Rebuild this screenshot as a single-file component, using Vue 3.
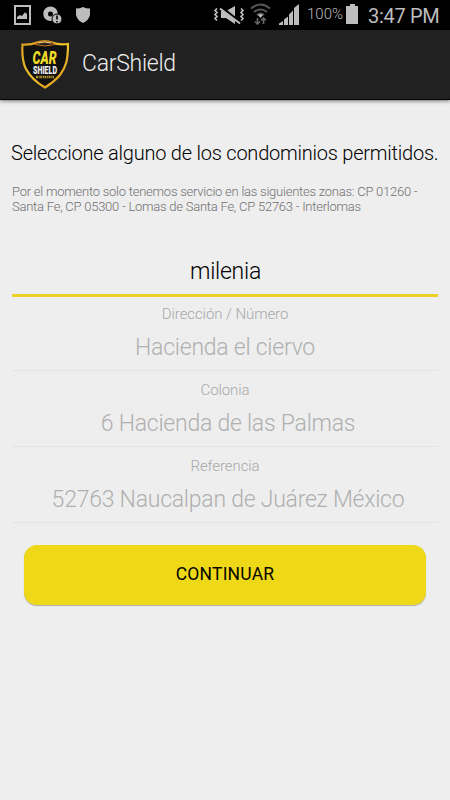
<script setup>
const fields = [
  { label: 'Dirección / Número', value: 'Hacienda el ciervo' },
  { label: 'Colonia', value: '6 Hacienda de las Palmas', indent: true },
  { label: 'Referencia', value: '52763 Naucalpan de Juárez México', indent: true },
]
</script>

<template>
  <div class="screen">
    <div class="status">
      <svg class="status-icons" width="300" height="30" viewBox="0 0 300 30" fill="#bdbdbd">
        <rect x="15" y="6" width="15" height="18" fill="none" stroke="#bdbdbd" stroke-width="2" />
        <path d="M17 19V17l3-2 2 1 3-4 1 2 1-1v6z" />
        <path fill-rule="evenodd" d="M50.500 6.500a7 7 0 1 0 0 14.500a7 7 0 0 0 0-14.500zM50.500 11.500a2.500 2.500 0 1 1 0 5a2.500 2.500 0 0 1 0-5z" />
        <circle cx="57" cy="19" r="5" stroke="#000" />
        <path d="M57 15.500v4M57 21v1.500" stroke="#000" stroke-width="1.600" />
        <path d="M76 8.500Q80 8.500 83 7Q86 8.500 90 8.500V15Q89 20 83 23Q77 20 76 15Z" />
        <path d="M221 11h5l9-5v18l-9-6h-5z" />
        <path d="M220 6.500l20 16" stroke="#000" stroke-width="3.500" />
        <path d="M220 8.500l20 15" stroke="#bdbdbd" stroke-width="2" />
        <path d="M217 8.500l-2 2 2 2-2 2 2 2-2 2 2 2M241 8.500l2 2-2 2 2 2-2 2 2 2-2 2" fill="none" stroke="#bdbdbd" stroke-width="1.700" />
        <path d="M251 8.500q9.500-8 19 0M254 12q6.500-5 13 0M257 15q3.500-3 7 0" fill="none" stroke="#565656" stroke-width="2.100" />
        <path d="M258 15q2.500-2 5 0l-2.500 3z" />
        <path d="M257.500 18v6m-2.500-2.500l2.500 2.500 2.500-2.500M263.500 24v-6m-2.500 2.500l2.500-2.500 2.500 2.500" fill="none" stroke="#656565" stroke-width="1.700" />
        <path d="M279 25v-1.500l4-2.500v4zM284 25v-5.500l4-3v8.500zM289 25V14.500l4-4V25zM294 25V8l5-4V25z" />
      </svg>
      <span class="percent">100%</span>
      <svg class="battery" width="14" height="21" viewBox="0 0 14 21" fill="#bdbdbd">
        <path d="M5 0h5v2h3v18H1V2h4z" />
      </svg>
      <span class="clock">3:47 PM</span>
    </div>
    <header class="appbar">
      <svg class="logo" width="50" height="52" viewBox="0 0 50 52">
        <defs>
          <linearGradient id="gold" x2="1" y2="1">
            <stop stop-color="#d99b20" />
            <stop offset=".5" stop-color="#eec52c" />
            <stop offset="1" stop-color="#d88d1a" />
          </linearGradient>
        </defs>
        <path d="M2.500 5.500Q11 6 17 3.500Q25 1 32 3.500Q38 6 48 5C48 21 46 28 40 36Q34 43 25 48.500Q12 41 6 30Q1.500 21 2.500 5.500Z" fill="#111" stroke="url(#gold)" stroke-width="2.200" />
        <path d="M15 5.500q3-3 10-3t10 3q-10 3-20 0z" fill="#252525" stroke="#c76b15" />
        <path d="M18 4q7-2 13 0" fill="none" stroke="#f2d679" />
        <text x="12.500" y="25" class="logo-car" textLength="24" lengthAdjust="spacingAndGlyphs">CAR</text>
        <text x="13" y="35" class="logo-shield" textLength="24" lengthAdjust="spacingAndGlyphs">SHIELD</text>
        <path d="M16 38h18" stroke="#b2922a" stroke-width="2.600" stroke-dasharray="2 .7 1 .5" />
      </svg>
      <h1>CarShield</h1>
    </header>
    <main>
      <h2>Seleccione alguno de los condominios permitidos.</h2>
      <p class="note">Por el momento solo tenemos servicio en las siguientes zonas: CP 01260 -<br>Santa Fe, CP 05300 - Lomas de Santa Fe, CP 52763 - Interlomas</p>
      <div class="search">milenia</div>
      <div v-for="field in fields" :key="field.label" class="field">
        <span class="label">{{ field.label }}</span>
        <span class="value" :class="{ indent: field.indent }">{{ field.value }}</span>
      </div>
      <button>CONTINUAR</button>
    </main>
  </div>
</template>

<style>
body { margin: 0; background: #eee; }
</style>
<style scoped>
.screen { width: 450px; height: 800px; overflow: hidden; background: #eee; font-family: Roboto, sans-serif; font-weight: 300; }
.status { display: flex; height: 30px; background: #000; color: #bdbdbd; font-weight: 400; }
.status-icons { flex: none; }
.percent { width: 45px; padding-left: 7px; box-sizing: border-box; font-size: 15px; line-height: 29px; font-weight: 300; white-space: nowrap; }
.battery { margin-top: 4px; flex: none; }
.clock { margin-left: 9px; font-size: 20px; line-height: 32px; letter-spacing: -.3px; white-space: nowrap; }
.appbar { display: flex; box-sizing: border-box; height: 70px; padding: 9px 0 0 20px; background: #212121; border-bottom: 1px solid #050505; box-shadow: 0 1px 4px #0008; }
.logo { flex: none; }
.logo-car { font: italic 900 18.500px Roboto, sans-serif; fill: #f0dc28; }
.logo-shield { font: 900 10.500px Roboto, sans-serif; fill: #eee; }
h1 { margin: 0 0 0 12px; font-size: 23px; line-height: 50px; font-weight: 300; letter-spacing: -.27px; color: #eee; }
main { display: flex; flex-direction: column; padding: 40px 12px 0; }
h2 { margin: 0 0 0 -1px; font-size: 20px; line-height: 26px; font-weight: 300; letter-spacing: -.228px; color: #000; white-space: nowrap; }
.note { margin: 18px 0 0; font-size: 13px; line-height: 15px; letter-spacing: -.24px; color: #707070; white-space: nowrap; }
.search { height: 45px; margin-top: 35px; padding-left: 1px; line-height: 46px; font-size: 23px; letter-spacing: -.25px; text-align: center; color: #000; border-bottom: 3px solid #edd026; }
.field { display: flex; flex-direction: column; align-items: center; height: 75px; border-bottom: 1px solid #e3e3e3; color: #a8a8a8; }
.search + .field { height: 73px; }
.label { margin-top: 9px; font-size: 15px; line-height: 20px; letter-spacing: -.08px; }
.search + .field .label { margin-top: 7px; }
.value { margin-top: 9px; font-size: 23px; line-height: 30px; letter-spacing: -.24px; white-space: nowrap; color: #b0b0b0; }
.indent { padding-left: 6px; }
button { height: 60px; margin: 22px 12px 0; padding: 0 0 2px; border: 0; border-radius: 13px; background: #eed818; color: #050500; font: 400 17.500px Roboto, sans-serif; letter-spacing: .2px; box-shadow: 0 1px 1px #0004; }
</style>
